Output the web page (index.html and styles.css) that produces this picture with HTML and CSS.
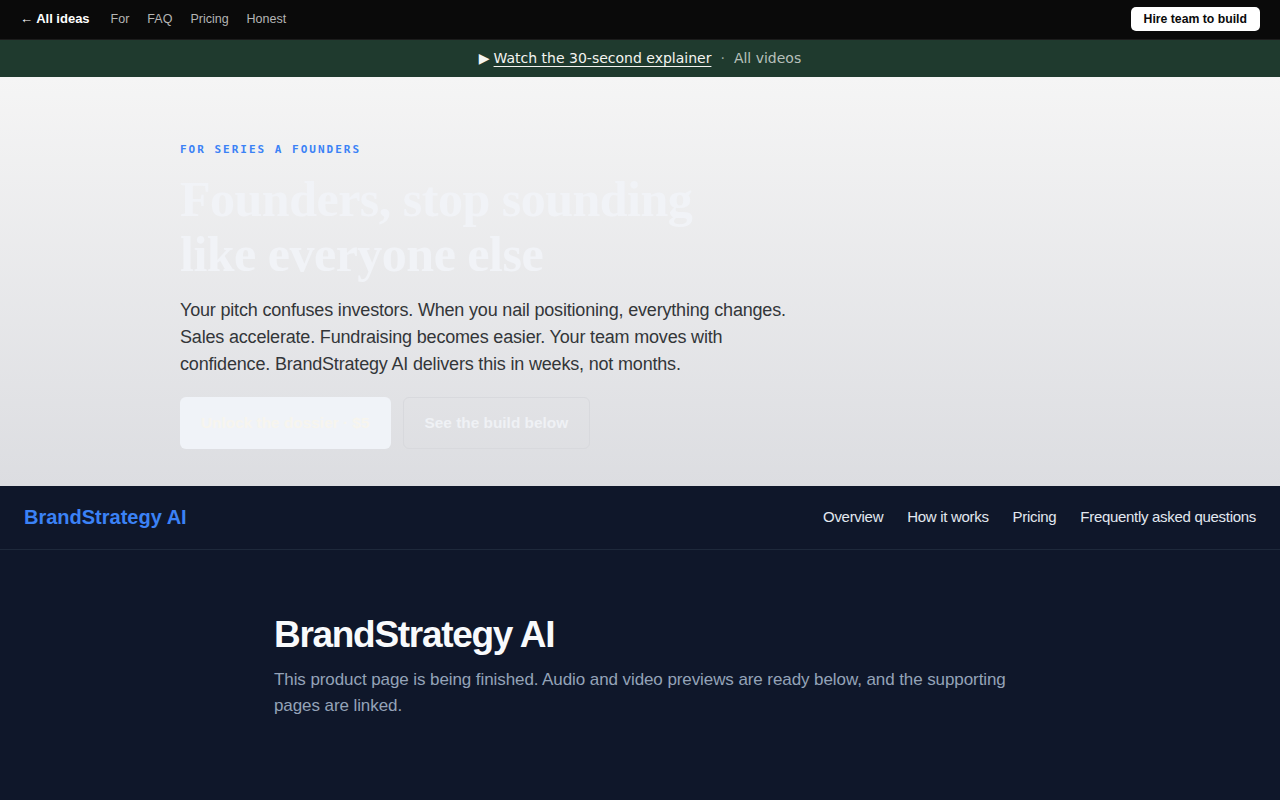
FILE: index.html
```html
<html>
  <head>
    <title>BrandStrategy AI</title>
    <meta name="viewport" content="width=device-width, initial-scale=1.0">
    <link rel="stylesheet" href="styles.css">
  </head>
  <body>
    <div class="topbar">
      <div class="topbar-left">
        <a class="back-link" href="#">&larr; All ideas</a>
        <a href="#">For</a>
        <a href="#">FAQ</a>
        <a href="#">Pricing</a>
        <a href="#">Honest</a>
      </div>
      <a class="hire-btn" href="#">Hire team to build</a>
    </div>

    <div class="video-banner">
      <span class="play">&#9654;</span>
      <a class="watch" href="#">Watch the 30-second explainer</a>
      <span class="dot">&middot;</span>
      <a class="all-videos" href="#">All videos</a>
    </div>

    <section class="hero">
      <div class="hero-inner">
        <p class="eyebrow">FOR SERIES A FOUNDERS</p>
        <h1>Founders, stop sounding<br>like everyone else</h1>
        <p class="lead">Your pitch confuses investors. When you nail positioning, everything changes. Sales accelerate. Fundraising becomes easier. Your team moves with confidence. BrandStrategy AI delivers this in weeks, not months.</p>
        <div class="hero-actions">
          <a class="btn-primary" href="#">Unlock the dossier &middot; $5</a>
          <a class="btn-ghost" href="#">See the build below</a>
        </div>
      </div>
    </section>

    <div class="product">
      <div class="product-nav">
        <a class="logo" href="#">BrandStrategy AI</a>
        <nav>
          <a href="#">Overview</a>
          <a href="#">How it works</a>
          <a href="#">Pricing</a>
          <a href="#">Frequently asked questions</a>
        </nav>
      </div>
      <div class="product-body">
        <h2>BrandStrategy AI</h2>
        <p>This product page is being finished. Audio and video previews are ready below, and the supporting pages are linked.</p>
      </div>
    </div>
  </body>
</html>
```

FILE: styles.css
```css
*{
  margin: 0px;
  box-sizing: border-box;
}

body{
  font-family: "Liberation Sans", Arial, sans-serif;
  background-color: #0f172a;
}

a{
  text-decoration: none;
  color: inherit;
}

/* top bar */
.topbar{
  height: 40px;
  background-color: #0a0a0a;
  border-bottom: 1px solid #1c1c1c;
  display: flex;
  align-items: center;
  justify-content: space-between;
  padding: 0 20px 2px 20px;
}

.topbar-left{
  display: flex;
  align-items: center;
  gap: 18px;
  font-size: 12.5px;
  color: #b5b5b5;
}

.back-link{
  color: white;
  font-weight: bold;
  font-size: 13px;
  margin-right: 3px;
}

.hire-btn{
  height: 24px;
  display: flex;
  align-items: center;
  background-color: white;
  color: #0a0a0a;
  font-size: 12.25px;
  font-weight: bold;
  padding: 0 13px;
  border-radius: 5px;
}

/* explainer strip */
.video-banner{
  height: 37px;
  background-color: #1f3a2e;
  display: flex;
  align-items: center;
  justify-content: center;
  font-family: "DejaVu Sans", sans-serif;
  font-size: 14px;
  color: #f4f4f0;
  padding-bottom: 1px;
}

.play{
  margin-right: 4px;
}

.watch{
  text-decoration: underline;
  text-underline-offset: 3px;
}

.dot{
  color: #9aa8a0;
  margin: 0 9px;
}

.all-videos{
  color: #b7c0bb;
}

/* hero */
.hero{
  height: 409px;
  background: linear-gradient(180deg, #f5f5f5 0%, #dcdde1 100%);
  padding: 66px 180px 0 180px;
}

.eyebrow{
  font-family: "DejaVu Sans Mono", monospace;
  font-weight: bold;
  font-size: 11px;
  letter-spacing: 2px;
  color: #3b82f6;
  margin-bottom: 16px;
}

.hero h1{
  font-family: "Liberation Serif", serif;
  font-size: 50px;
  line-height: 55px;
  font-weight: bold;
  letter-spacing: -0.01em;
  color: #f1f3f7;
  margin-bottom: 15px;
}

.lead{
  max-width: 620px;
  font-size: 18px;
  line-height: 27px;
  letter-spacing: -0.01em;
  color: #333639;
  margin-bottom: 19px;
}

.hero-actions{
  display: flex;
  gap: 12px;
}

.btn-primary, .btn-ghost{
  height: 52px;
  display: flex;
  align-items: center;
  padding: 0 21px;
  border-radius: 6px;
  font-size: 15.4px;
  font-weight: bold;
}

.btn-primary{
  background-color: #f0f3f8;
  color: #f7f5ee;
}

.btn-ghost{
  border: 1px solid #d8d9dd;
  color: #eff1f5;
}

/* product section */
.product{
  background-color: #0f172a;
  min-height: 314px;
}

.product-nav{
  height: 64px;
  border-bottom: 1px solid #1e293b;
  display: flex;
  align-items: center;
  justify-content: space-between;
  padding: 0 24px;
}

.logo{
  color: #3b82f6;
  font-size: 20px;
  font-weight: bold;
}

.product-nav nav{
  display: flex;
  gap: 24px;
  font-size: 15px;
  letter-spacing: -0.02em;
  color: #e2e8f0;
  padding-bottom: 2px;
}

.product-body{
  max-width: 732px;
  margin: 0 auto;
  padding-top: 64px;
}

.product-body h2{
  font-size: 37px;
  letter-spacing: -0.035em;
  color: #f8fafc;
  margin-bottom: 11px;
}

.product-body p{
  font-size: 17px;
  line-height: 26px;
  letter-spacing: -0.005em;
  color: #94a3b8;
}
```
